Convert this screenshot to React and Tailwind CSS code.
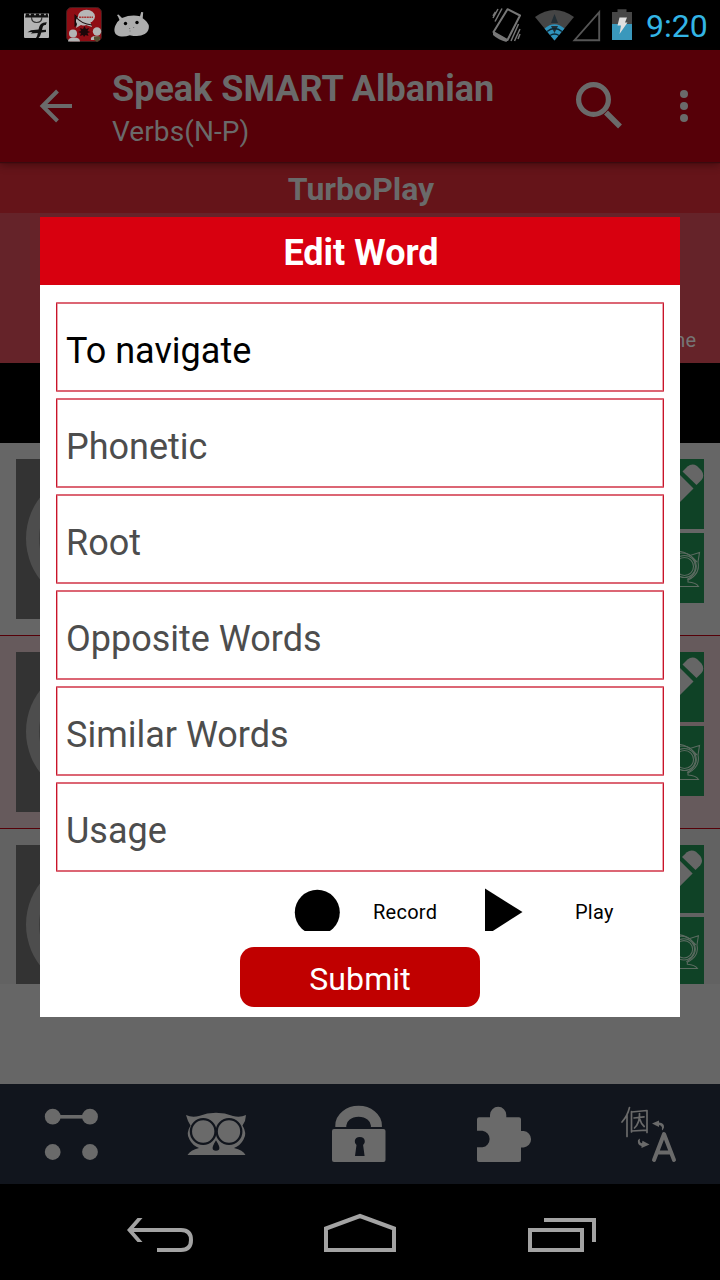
import React from "react";

const FIELDS = ["Phonetic", "Root", "Opposite Words", "Similar Words", "Usage"];

function StatusBar() {
  return (
    <div className="flex h-[50px] shrink-0 items-center justify-between bg-black">
      <svg className="h-[50px] w-[240px]" viewBox="0 0 240 50">
        <path d="M24 13.500h25v23.500q0 1-1 1H25q-1 0-1-1z" fill="#b4b4b4" />
        <path d="M26 13.500h21.500l1 4h-23.500z" fill="#111" />
        <path d="M29 14.500h2M34 14.500h2M39 14.500h2M44 14.500h2" stroke="#999" strokeWidth="1.500" />
        <path d="M31.500 17q0 5.500 5.200 5.500t5.200-5.500" fill="none" stroke="#333" strokeWidth="1.200" />
        <path d="M38.500 29.500q1-7.500 8.300-7.200l-1 2.700q-2.800-.5-3.300 3l-.5 2 4-.3v2.300l-4.700.5q-1 4-2.800 5.500h-2.500q1.500-2 1.800-5l-7 .5 1.700-1.500-5 .2 3.500-2z" fill="#111" />
        <rect x="66.500" y="7.500" width="35" height="34" rx="5" fill="#8f0d14" stroke="#3c2020" />
        <path d="M74.500 14l5 5v5l-5 3z" fill="#16090a" />
        <ellipse cx="86.500" cy="16.500" rx="8.500" ry="6.700" fill="#b7b7b7" />
        <path d="M79 16q-5 4-2 8l-1 4 5-3q3 1 5 0l6 2-2-6z" fill="#b7b7b7" />
        <path d="M75 16q6 8 17 9" fill="none" stroke="#211" strokeWidth="1.100" />
        <path d="M79 17.300h14" stroke="#a33" strokeWidth="1.500" strokeDasharray="2 .6" />
        <circle cx="73" cy="33.500" r="4" fill="#b4b4b4" /><circle cx="97" cy="31.500" r="4.200" fill="#b4b4b4" />
        <path d="M68 41.500q0-4 6-4t6 4zM91 40q-1-3 3-4l6 1v3z" fill="#b4b4b4" />
        <path d="M84.500 26l1.500 3 3-1-1.500 3 3 1-3 1 1 3-3-1-1.500 2-1-2-3 1 1-3-3-1 3-1-1-3 3 1z" fill="#1c0709" />
        <path d="M94 36.500h6v3l-3 2.500-3-2.500z" fill="#554f31" />
        <path d="M119.500 20q-1-3-2.500-5l1.500-.5 3.500 3.500q9-3.800 18-1.800l1.200-4.200 2 .2-.5 6q6 4 6.200 8.500c0 5-4 8.500-10 9-5 .5-7 0-9-.5-5 1.800-10 1.800-13-.2-3-2-3-6-1.500-9.500q1-3.500 4.100-5.500z" fill="#adadad" />
        <circle cx="125.500" cy="23.500" r="1.700" /><circle cx="137" cy="22.500" r="1.700" />
        <path d="M129 28.500h1.200M133 27.500h1.200M129.500 31h1" stroke="#777" />
      </svg>
      <div className="flex items-center">
        <svg className="h-[50px] w-[160px]" viewBox="480 0 160 50">
          <path d="M507.500 9.200l12.500 6.300-12.500 24.500-14-8z" fill="none" stroke="#777" strokeWidth="2" strokeLinejoin="round" />
          <path d="M493 31.500l14.500 8-1 2.500q-8-2-13.500-7z" fill="#777" />
          <path d="M502 8.500l-7 13M498 9l-5 9M495.500 12l-2.500 4M518.500 24l-7.500 17M520 29l-5.500 12M520 34l-2 5" stroke="#777" strokeWidth="1.500" />
          <path d="M535 17Q554.500 3 574 17L554.500 40.500z" fill="#454545" />
          <path d="M544.500 28.500q10-8.500 20 0l-10 12z" fill="#2e93bd" />
          <path d="M554.500 14l3.500 9h-7zM551 26h7l-3.500 7z" fill="#222e35" />
          <path d="M547 31.500q7.500-6 15 0M550 35.500q4.500-3 9 0" fill="none" stroke="#0b2633" strokeWidth="1.500" />
          <path d="M574.500 40.200h24.700v-28z" fill="none" stroke="#555" strokeWidth="1.900" />
          <path d="M612 12h5.500V9.200h9V12h5.500v12h-20z" fill="#464646" />
          <path d="M612 24h20v16h-20z" fill="#3a98bc" />
          <path d="M619.500 17.500h7.500l-2 5h2.500l-8 11.500 1.500-8.500h-3.500z" fill="#e0e0e0" />
        </svg>
        <div className="w-[80px] pt-[2px] pl-[6px] text-[32px] leading-[50px] text-[#33b5e5]">9:20</div>
      </div>
    </div>
  );
}

function AppBar() {
  return (
    <div className="z-10 flex h-[112px] shrink-0 items-center bg-[#560008] text-[#6a6a6a] shadow-[0_1px_1px_#3a0a0e,0_3px_8px_rgba(30,0,0,0.45)]">
      <svg className="h-[112px] w-[112px]" viewBox="0 50 112 112" fill="none" stroke="#6a6a6a" strokeWidth="4">
        <path d="M72 106H43M57.500 91L42.500 106l15 15" />
      </svg>
      <div className="flex flex-1 flex-col pt-[4px]">
        <div className="text-[36px] leading-[42px] font-bold whitespace-nowrap">Speak SMART Albanian</div>
        <div className="mt-[5px] text-[28px] leading-[34px] tracking-[0.1px]">Verbs(N-P)</div>
      </div>
      <svg className="h-[112px] w-[160px]" viewBox="560 50 160 112" fill="none" stroke="#6a6a6a">
        <circle cx="593.500" cy="99.500" r="14.900" strokeWidth="5.200" />
        <path d="M606 112.500L620 126.500" strokeWidth="5.500" />
        <g fill="#6a6a6a" stroke="none"><circle cx="684" cy="94" r="4" /><circle cx="684" cy="106" r="4" /><circle cx="684" cy="118" r="4" /></g>
      </svg>
    </div>
  );
}

function Row({ tone, clipped }) {
  return (
    <div className={`flex shrink-0 justify-between overflow-hidden px-4 pt-4 ${clipped ? "h-[155px]" : "h-[193px] border-b border-[#560008]"} ${tone}`}>
      <svg className="h-[160px] w-[160px] shrink-0 bg-[#333]" viewBox="16 459 160 160">
        <circle cx="93" cy="538.500" r="67" fill="#4d4d4d" />
        <circle cx="93" cy="538.500" r="54" fill="#3d3d3d" />
      </svg>
      <div className="flex shrink-0 flex-col gap-1">
        <svg className="h-[70px] w-[70px] bg-[#0f4226]" viewBox="634 459 70 70" fill="#666">
          <path d="M682.500 471.500l5-5q4.500-3.500 9.500-.5l4.500 4.500q3.500 5 0 9.500l-5 5z" />
          <path d="M680 475l13.500 13.500-37 37-15 2 2-15z" />
        </svg>
        <svg className="h-[70px] w-[70px] bg-[#0f4226]" viewBox="634 533 70 70" fill="none" stroke="#5c6b61" strokeWidth="1.100">
          <circle cx="684.500" cy="566.500" r="11" /><circle cx="684.500" cy="566.500" r="9" />
          <path d="M672 552q9-2.500 18 3.500l9.500-3-1.500 9.500q2.500 12-10 18v2q8 .5 10.500 4.500h-30" />
          <path d="M677 553.500q10-2 15 3.500 5.500 6 4 12-2 7-9 10.500M692 557l5 5" />
        </svg>
      </div>
    </div>
  );
}

function BottomBar() {
  return (
    <div className="grid h-[100px] shrink-0 grid-cols-5 bg-[#11151d]">
      <svg className="h-[100px] w-[144px]" viewBox="0 1084 144 100" fill="#6a6a6a">
        <circle cx="52.700" cy="1116.700" r="7.900" /><circle cx="90" cy="1116.700" r="7.900" />
        <circle cx="52.700" cy="1152" r="7.900" /><circle cx="90" cy="1152" r="7.900" />
        <rect x="58" y="1115" width="28" height="3.600" />
      </svg>
      <svg className="h-[100px] w-[144px]" viewBox="144 1084 144 100">
        <path d="M186 1115q6 3 13 1 8-3.200 17-3.200t17 3.200q7 2 13-1l-1 6-2.500 4.500q5 8 1 14-3 6-9.500 8.500 9 2 11.500 7h-58q3-5 11.500-7-6.500-2.500-9.500-8.500-4-6 1-14l-2.500-4.500z" fill="#6a6a6a" />
        <g fill="#6a6a6a" stroke="#11151d" strokeWidth="2.300">
          <circle cx="203.200" cy="1131.500" r="12.300" /><circle cx="229" cy="1131.500" r="12.300" />
        </g>
        <path d="M216 1141.500q5.500 8.500 0 8.500t0-8.500z" fill="#11151d" stroke="#11151d" strokeWidth="1.300" />
      </svg>
      <svg className="h-[100px] w-[144px]" viewBox="288 1084 144 100">
        <path d="M340.800 1127v-1.500a17.500 14 0 0 1 35.600 0v1.500" fill="none" stroke="#6a6a6a" strokeWidth="11" />
        <rect x="332" y="1129" width="53.500" height="33" rx="2" fill="#6a6a6a" />
        <path d="M355 1156l1.500-11q-2-1.500-1.700-4 .5-4 5-4t5 4q.3 2.500-1.700 4l1.500 11z" fill="#11151d" />
      </svg>
      <svg className="h-[100px] w-[144px]" viewBox="432 1084 144 100">
        <path d="M479 1117.300h11v-2.300a8.100 8.100 0 0 1 16.300 0v2.300H519q2 0 2 2v11.700h2.700a8.300 8.300 0 0 1 0 16.500H521v12.500q0 2-2 2h-40q-2 0-2-2v-12.700h5.500a8.400 8.400 0 0 0 0-16.600H477V1119.300q0-2 2-2z" fill="#6a6a6a" />
      </svg>
      <svg className="h-[100px] w-[144px]" viewBox="576 1084 144 100" fill="none" stroke="#6a6a6a" strokeLinecap="round" strokeLinejoin="round">
        <path d="M629.500 1107.500q-2 8.500-7.500 14.500M627 1115v21.500M631.500 1111.500v20.500M631.500 1112l15.500-1.500v22M632 1131l15-.8M634 1118l10-1.200M639.500 1113.500q.5 9-5 14.500M639.700 1119q1.500 5 4.500 7.500" strokeWidth="1.700" />
        <path d="M652 1123.500l7-3v2q5.500.3 5 5l-1.500 3q-1-1-.5-3-.5-2.500-3-2.500v2zM649.500 1144.500l-8 3.500v-2q-4.500-1-3.500-6l2-1.500q-1 4.500 2 4.700l.5-2.500z" fill="#6a6a6a" stroke="none" />
        <path d="M654 1160l10-26 10 26M657.500 1152.500h13" strokeWidth="4" />
      </svg>
    </div>
  );
}

function NavBar() {
  return (
    <div className="flex h-[96px] shrink-0 bg-black">
      <svg className="h-[96px] w-[260px]" viewBox="0 1184 260 96" fill="none" stroke="#a3a3a3" strokeWidth="4">
        <path d="M131 1230h50q10 0 10 10t-10 10h-24" />
        <path d="M127 1230l10.500-12h5l-10.500 12 10.500 12h-5z" fill="#a3a3a3" stroke="none" />
      </svg>
      <svg className="h-[96px] w-[200px]" viewBox="260 1184 200 96" fill="none" stroke="#a3a3a3" strokeWidth="4">
        <path d="M326 1250v-21.500l34-12.500 34 12.500V1250z" />
      </svg>
      <svg className="h-[96px] w-[260px]" viewBox="460 1184 260 96" fill="none" stroke="#a3a3a3" strokeWidth="4">
        <path d="M530 1230h52v20h-52zM544 1220h50v22" />
      </svg>
    </div>
  );
}

function Field(props) {
  return (
    <input
      {...props}
      className="block h-[90px] w-full rounded-[1px] border-x border-y-2 border-x-[#c8142a] border-y-[#dc6674] bg-white pt-[7px] pl-[9px] text-[36px] text-black shadow-[inset_1px_0_0_#eda5ad,inset_-1px_0_0_#eda5ad] outline-none placeholder:text-[#4d4d4d] placeholder:opacity-100"
    />
  );
}

function EditDialog() {
  return (
    <div className="absolute top-[217px] left-10 flex h-[800px] w-[640px] flex-col bg-white">
      <div className="h-[68px] bg-[#d8000f] pl-[2px] text-center text-[36px] leading-[72px] font-bold text-white">Edit Word</div>
      <div className="flex flex-col gap-[6px] px-4 pt-[17px]">
        <Field defaultValue="To navigate" />
        {FIELDS.map((f) => <Field key={f} placeholder={f} />)}
      </div>
      <div className="mt-[9px] flex h-[50px] items-center pl-[254px] text-[20px] text-black">
        <svg className="h-[50px] w-[79px]" viewBox="294 881 79 50"><circle cx="317.300" cy="912.300" r="22.500" /></svg>
        <span className="w-[112px] pt-3 tracking-[0.25px]">Record</span>
        <svg className="h-[50px] w-[90px]" viewBox="485 881 90 50"><path d="M485 888.500L522.500 912 485 936z" /></svg>
        <span className="pt-3 tracking-[0.25px]">Play</span>
      </div>
      <button className="mt-4 h-[60px] w-[240px] self-center rounded-[14px] bg-[#c00000] pt-[2px] text-[32px] leading-[60px] tracking-[0.1px] text-white">Submit</button>
    </div>
  );
}

export default function App() {
  return (
    <div className="relative flex h-[1280px] w-[720px] flex-col overflow-hidden bg-[#666] font-[Roboto,sans-serif]">
      <StatusBar />
      <AppBar />
      <div className="h-[51px] shrink-0 bg-[#651419] pl-[2px] text-center text-[32px] leading-[55px] font-bold text-[#6a6a6a]">TurboPlay</div>
      <div className="flex h-[150px] shrink-0 items-end justify-end bg-[#652329] pr-[24px] pb-[8px] text-[20px] text-[#757575]">me</div>
      <div className="h-[80px] shrink-0 bg-black" />
      <Row tone="bg-[#666]" />
      <Row tone="bg-[#665a5c]" />
      <Row tone="bg-[#626262]" clipped />
      <div className="h-[100px] shrink-0" />
      <BottomBar />
      <NavBar />
      <EditDialog />
    </div>
  );
}
